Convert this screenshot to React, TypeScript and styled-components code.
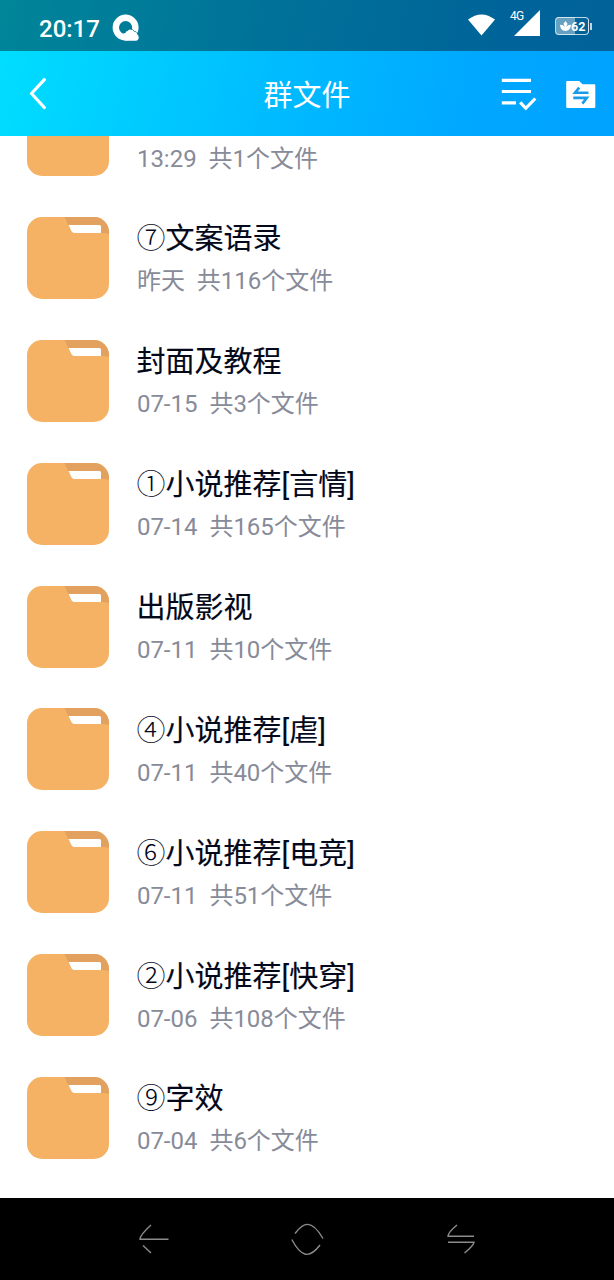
import { styled, createGlobalStyle } from "styled-components";

const colors = {
	folder: "#f5b264",
	folderShade: "#e3a160",
	title: "#03081a",
	meta: "#878b99",
	nav: "#000",
	navIcon: "#8c8c8c",
};

type Folder = {
	/** circled number in front of the name */
	mark?: string;
	name?: string;
	date: string;
	count: number;
};

const folders: Folder[] = [
	{ date: "13:29", count: 1 },
	{ mark: "⑦", name: "文案语录", date: "昨天", count: 116 },
	{ name: "封面及教程", date: "07-15", count: 3 },
	{ mark: "①", name: "小说推荐[言情]", date: "07-14", count: 165 },
	{ name: "出版影视", date: "07-11", count: 10 },
	{ mark: "④", name: "小说推荐[虐]", date: "07-11", count: 40 },
	{ mark: "⑥", name: "小说推荐[电竞]", date: "07-11", count: 51 },
	{ mark: "②", name: "小说推荐[快穿]", date: "07-06", count: 108 },
	{ mark: "⑨", name: "字效", date: "07-04", count: 6 },
];

export default function App() {
	return (
		<Screen>
			<GlobalStyle />
			<TopArea>
				<StatusBar />
				<Header />
			</TopArea>
			<FolderList>
				{folders.map((folder, i) => (
					<FolderRow key={i}>
						<FolderIcon />
						<FolderText>
							<FolderName>
								{folder.mark && <FolderMark>{folder.mark}</FolderMark>}
								{folder.name}
							</FolderName>
							<FolderMeta>
								{`${folder.date}  共${folder.count}个文件`}
							</FolderMeta>
						</FolderText>
					</FolderRow>
				))}
			</FolderList>
			<SystemNav />
		</Screen>
	);
}

const StatusBar = () => (
	<StatusBarWrap>
		<Clock>20:17</Clock>
		<svg width='28' height='28' viewBox='0 0 28 28'>
			<circle cx='13.6' cy='13.6' r='9.8' fill='none' stroke='#fff' strokeWidth='6.4' />
			<path
				d='M14 26.8a4 4 0 0 1-2.5-7.2q1-.8 2-.7q.3-1.7 2-1.9q1.5-2.2 3.7-1.2q1.5.7 1.9 2.4q2.2-.2 3 1.6q2.7.8 2.7 3.600q-.2 3-3 3.400z'
				fill='#fff'
			/>
			<path d='M19.8 15.300q1.800.5 2.200 2q2.600 0 3.500 2' fill='none' stroke='#03759a' strokeWidth='.7' />
		</svg>
		<StatusIcons>
			<Wifi width='27' height='22' viewBox='0 0 27 22'>
				<path d='M0 5.6Q13.5-4.8 27 5.6L13.5 21.6z' fill='#fff' />
			</Wifi>
			<Signal>
				<NetworkLabel>4G</NetworkLabel>
				<svg width='26' height='26' viewBox='0 0 26 26'>
					<path d='M26 0V26H0z' fill='#fff' />
				</svg>
			</Signal>
			<Battery>
				<BatteryBody>
					<svg width='11' height='11' viewBox='0 0 12 12'>
						<path
							d='M6 0l2.200 3L6.800 6.500l1.900-2L12 4.200C11.700 8.400 9.600 11 6 11S.3 8.400 0 4.200l3.300.3l1.900 2L3.800 3z'
							fill='#fff'
						/>
					</svg>
					62
				</BatteryBody>
				<BatteryTip />
			</Battery>
		</StatusIcons>
	</StatusBarWrap>
);

const Header = () => (
	<HeaderWrap>
		<HeaderSide>
			<svg width='18' height='32' viewBox='0 0 18 32'>
				<path
					d='M15.3 1.7L2.5 15.5l12.8 14'
					fill='none'
					stroke='#fff'
					strokeWidth='3.2'
					strokeLinecap='round'
					strokeLinejoin='round'
				/>
			</svg>
		</HeaderSide>
		<HeaderTitle>群文件</HeaderTitle>
		<HeaderSide alignEnd>
			<svg width='36' height='34' viewBox='0 0 36 34'>
				<path
					d='M.8 3.4H30M.8 14.5H30M.8 25.8H15M19.2 25.3l5.6 6L34.3 21.5'
					fill='none'
					stroke='#fff'
					strokeWidth='3.2'
				/>
			</svg>
			<SharedFolder width='30' height='28' viewBox='0 0 30 28'>
				<path
					d='M1.3 0H13.2L16.5 3.2H28.2Q29.3 3.2 29.3 4.3V25.8Q29.3 27 28.2 27H1.5Q.2 27 .2 25.8V1.2Q.2 0 1.3 0z'
					fill='#fff'
				/>
				<path
					d='M13.2 6.6L9 11.8H22.5M7.3 16.9H20.8L16.4 22.6'
					fill='none'
					stroke='#1a9be8'
					strokeWidth='2.6'
				/>
			</SharedFolder>
		</HeaderSide>
	</HeaderWrap>
);

const FolderIcon = () => (
	<svg width='82' height='82' viewBox='0 0 82 82'>
		<rect width='82' height='82' rx='15' fill={colors.folder} />
		<path
			d='M37.5 0H67A15 15 0 0 1 82 15V17Q79 16 75 16H45z'
			fill={colors.folderShade}
		/>
		<path d='M41.5 8H72.5Q74 8 74 9.5V16H47Q45.3 16 44.6 14.6z' fill='#fff' />
	</svg>
);

const SystemNav = () => (
	<SystemNavWrap>
		<svg width='32' height='32' viewBox='0 0 32 32'>
			<path d='M13 2Q2 12 2 16.3H30.5M5 22.5L13 30' />
		</svg>
		<svg width='34' height='34' viewBox='0 0 34 34'>
			<path d='M4 11.5C12.3.5 20.3-3.5 32 16.5M.8 17.5C10.300 35.5 18.300 37 29 23' />
		</svg>
		<svg width='30' height='32' viewBox='0 0 30 32'>
			<path d='M12 2Q3 9.500 3 13.200H29M3 19.300H29Q28.500 22.500 19.500 30' />
		</svg>
	</SystemNavWrap>
);

const GlobalStyle = createGlobalStyle`
	body {
		margin: 0;
		background-color: #fff;
		font-family: Roboto, "Noto Sans CJK SC", sans-serif;
	}
	svg {
		display: block;
		flex-shrink: 0;
	}
`;

const Screen = styled.main`
	display: flex;
	flex-direction: column;
	width: 614px;
	height: 1280px;
	overflow: hidden;
`;

const TopArea = styled.div`
	flex-shrink: 0;
	background: linear-gradient(103deg, #00dfff 0%, #00bcff 45%, #00a6ff 80%, #00a3ff 100%);
`;

const StatusBarWrap = styled.div`
	display: flex;
	align-items: center;
	box-sizing: border-box;
	height: 51px;
	padding: 4px 22px 0 39px;
	background-color: rgba(0, 0, 0, 0.4);
	color: #fff;
`;

const Clock = styled.span`
	width: 73px;
	padding-top: 3px;
	font-size: 24px;
	font-weight: 500;
	line-height: 28px;
`;

const StatusIcons = styled.div`
	display: flex;
	align-items: flex-start;
	align-self: flex-start;
	margin-left: auto;
	padding-top: 6px;
`;

const Wifi = styled.svg`
	margin-top: 4px;
`;

const Signal = styled.div`
	display: flex;
	align-items: flex-start;
	margin: 0 15px;
	svg {
		margin-left: -9px;
	}
`;

const NetworkLabel = styled.span`
	width: 13px;
	font-size: 12px;
	letter-spacing: -0.8px;
	line-height: 12px;
`;

const Battery = styled.div`
	display: flex;
	align-items: center;
	gap: 1px;
	padding-top: 7px;
`;

const BatteryBody = styled.div`
	display: flex;
	align-items: center;
	box-sizing: border-box;
	width: 34px;
	height: 18px;
	padding-left: 4px;
	border: 1px solid rgba(255, 255, 255, 0.75);
	border-radius: 4px;
	background: linear-gradient(90deg, rgba(255, 255, 255, 0.4) 60%, transparent 60%);
	font-size: 12.5px;
	font-weight: 700;
`;

const BatteryTip = styled.div`
	width: 2px;
	height: 7px;
	background-color: rgba(255, 255, 255, 0.75);
`;

const HeaderWrap = styled.header`
	display: grid;
	grid-template-columns: 1fr auto 1fr;
	align-items: center;
	height: 85px;
	padding: 0 18px 0 29px;
`;

const HeaderSide = styled.div.withConfig({
	shouldForwardProp: (prop) => prop !== "alignEnd",
})<{ alignEnd?: boolean }>`
	display: flex;
	align-items: center;
	gap: 29.5px;
	justify-content: ${(p) => (p.alignEnd ? "flex-end" : "flex-start")};
`;

const SharedFolder = styled.svg`
	margin-top: 3px;
`;

const HeaderTitle = styled.h1`
	margin: 0 11px 0 0;
	padding-top: 5px;
	color: #fff;
	font-size: 29px;
	font-weight: 400;
	line-height: 42px;
`;

// scrolled to the end, so rows stack up from the bottom edge
const FolderList = styled.div`
	display: flex;
	flex: 1;
	flex-direction: column;
	justify-content: flex-end;
	min-height: 0;
	overflow: hidden;
	padding-bottom: 18.6px;
`;

const FolderRow = styled.div`
	display: flex;
	flex-shrink: 0;
	align-items: center;
	gap: 27.5px;
	height: 122.86px;
	padding-left: 27px;
`;

const FolderText = styled.div`
	padding-top: 5px;
`;

const FolderName = styled.div`
	height: 42px;
	color: ${colors.title};
	font-size: 29px;
	line-height: 42px;
	-webkit-text-stroke: 0.15px ${colors.title};
`;

const FolderMark = styled.span`
	font-family: "Noto Sans CJK SC", sans-serif;
	font-weight: 300;
	line-height: 1;
	-webkit-text-stroke: 0;
`;

const FolderMeta = styled.div`
	padding-left: 0.4px;
	color: ${colors.meta};
	font-size: 24px;
	line-height: 42px;
	white-space: pre;
`;

const SystemNavWrap = styled.nav`
	display: flex;
	flex-shrink: 0;
	align-items: center;
	justify-content: space-between;
	box-sizing: border-box;
	height: 82px;
	padding: 0 139px 0 138px;
	background-color: ${colors.nav};
	path {
		fill: none;
		stroke: ${colors.navIcon};
		stroke-width: 1.4;
	}
`;
